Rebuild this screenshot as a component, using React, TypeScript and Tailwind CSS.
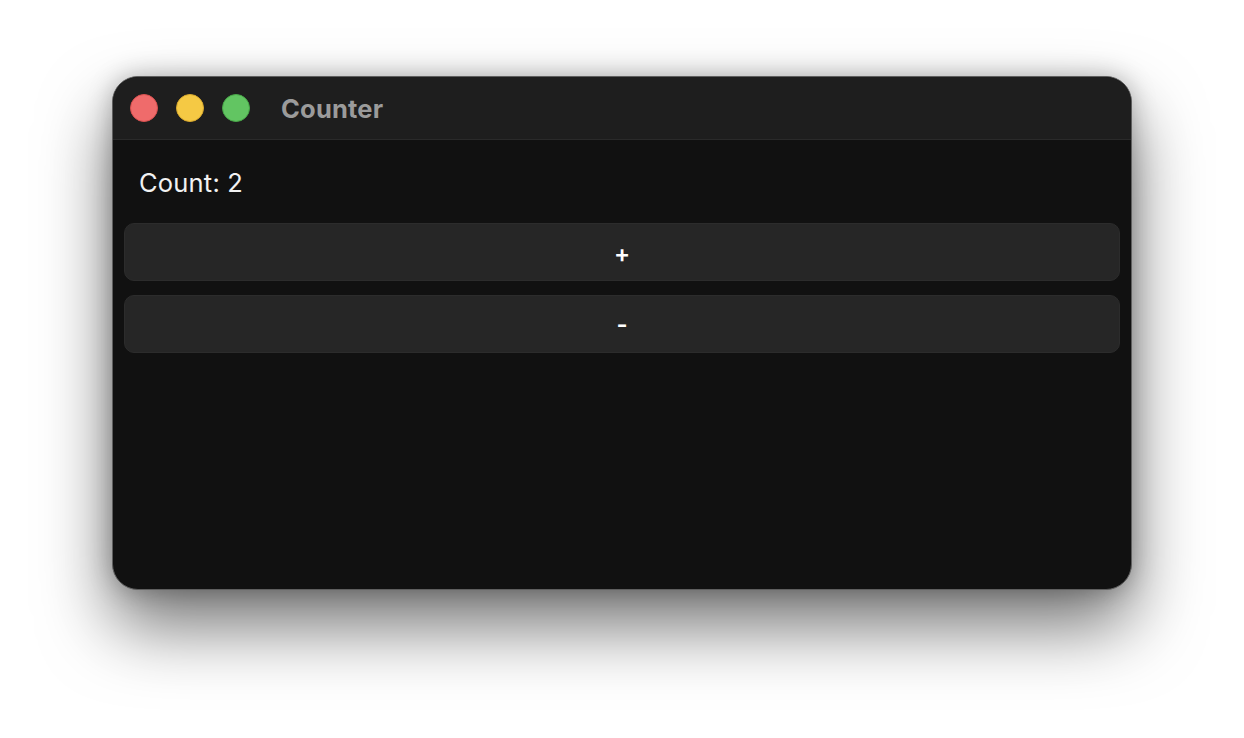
import React, { useState } from "react";

export default function App() {
  const [count, setCount] = useState(2);
  return (
    <div className="w-[1244px] h-[738px] bg-white pl-[112px] pt-[76px] overflow-hidden" style={{ fontFamily: "Inter, 'Noto Sans', sans-serif" }}>
      <div className="w-[1020px] h-[514px] rounded-[26px] border border-[#5f5f5f] bg-[#111111] overflow-hidden flex flex-col shadow-[0_36px_70px_rgba(0,0,0,0.55),0_0_24px_rgba(0,0,0,0.25)]">
        <div className="h-[63px] shrink-0 bg-[#1e1e1e] border-b border-[#2a2a2a] flex items-center pl-[17px]">
          <div className="flex items-center gap-[18px]">
            <span className="w-[28px] h-[28px] rounded-full bg-[#ef6b6b] border border-[#d9504f]" />
            <span className="w-[28px] h-[28px] rounded-full bg-[#f5c944] border border-[#d9aa2e]" />
            <span className="w-[28px] h-[28px] rounded-full bg-[#62c562] border border-[#48a648]" />
          </div>
          <span className="ml-[31px] mt-[2px] text-[25.5px] tracking-[0.2px] font-bold text-[#9b9b9b] leading-none">Counter</span>
        </div>
        <div className="flex flex-col px-[11px]">
          <div className="pl-[15px] pt-[27px] pb-[24px] text-[25.5px] tracking-[0.2px] text-[#f2f2f2] leading-[32px]">Count: {count}</div>
          <div className="flex flex-col gap-[14px]">
            <button onClick={() => setCount(count + 1)} className="h-[58px] pt-[3px] rounded-[10px] bg-[#262626] border border-[#2c2c2c] text-white text-[24px] font-semibold">+</button>
            <button onClick={() => setCount(count - 1)} className="h-[58px] pt-[1px] rounded-[10px] bg-[#262626] border border-[#2c2c2c] text-white text-[24px] font-semibold">-</button>
          </div>
        </div>
      </div>
    </div>
  );
}
